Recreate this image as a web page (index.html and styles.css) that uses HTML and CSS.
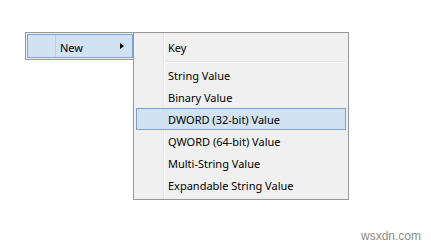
FILE: index.html
```html
<!DOCTYPE html>
<html>
<head>
<meta charset="utf-8">
<link rel="stylesheet" href="styles.css">
</head>
<body>
<div class="stage">
  <div class="menu menu-main">
    <div class="item item-hot">
      <span class="icon-col"></span>
      <span class="label">New</span>
      <span class="arrow"></span>
    </div>
  </div>
  <div class="menu menu-sub">
    <div class="item"><span class="label">Key</span></div>
    <div class="sep"></div>
    <div class="item"><span class="label">String Value</span></div>
    <div class="item"><span class="label">Binary Value</span></div>
    <div class="item item-hot"><span class="label">DWORD (32-bit) Value</span></div>
    <div class="item"><span class="label">QWORD (64-bit) Value</span></div>
    <div class="item"><span class="label">Multi-String Value</span></div>
    <div class="item"><span class="label">Expandable String Value</span></div>
  </div>
</div>
<div class="watermark">wsxdn.com</div>
</body>
</html>
```
FILE: styles.css
```css
html, body {
  margin: 0;
  padding: 0;
  background: #ffffff;
  width: 431px;
  height: 248px;
  overflow: hidden;
  font-family: "Noto Sans", "Segoe UI", sans-serif;
  font-size: 11px;
  color: #000;
}

.stage {
  display: flex;
  align-items: flex-start;
  padding: 32px 0 0 25px;
}

.menu {
  box-sizing: border-box;
  border: 1px solid #979797;
  background-color: #f0f0f0;
}

.menu-main {
  width: 110px;
  height: 28px;
  padding: 1px;
}

.menu-main .item {
  box-sizing: border-box;
  height: 24px;
  display: flex;
  align-items: center;
  border: 1px solid transparent;
}

.menu-main .icon-col {
  width: 27px;
  height: 100%;
  border-right: 1px solid #b9cfe6;
}

.menu-main .label {
  margin-left: 4px;
  flex: 1;
  padding-top: 2px;
}

.arrow {
  width: 0;
  height: 0;
  border-top: 3.5px solid transparent;
  border-bottom: 3.5px solid transparent;
  border-left: 4px solid #000;
  margin-right: 8px;
}

.menu-sub {
  width: 216px;
  height: 168px;
  margin-left: -2px;
  padding: 3px 2px 3px;
  background-image: linear-gradient(to right, transparent 29px, #e2e3e3 29px, #e2e3e3 30px, #ffffff 30px, #ffffff 31px, transparent 31px);
}

.menu-sub .item {
  box-sizing: border-box;
  height: 22px;
  display: flex;
  align-items: center;
  padding-left: 31px;
  padding-top: 1px;
  border: 1px solid transparent;
}

.item-hot {
  background: #d1e2f2;
  border-color: #7da2ce !important;
}

.sep {
  height: 6px;
  margin-left: 30px;
  background-image: linear-gradient(to bottom, transparent 3px, #e2e3e3 3px, #e2e3e3 4px, #ffffff 4px, #ffffff 5px, transparent 5px);
}

.watermark {
  position: absolute;
  left: 361px;
  top: 229px;
  font-family: "Liberation Sans", Arial, sans-serif;
  font-size: 12px;
  color: #8a8a8a;
}
```
